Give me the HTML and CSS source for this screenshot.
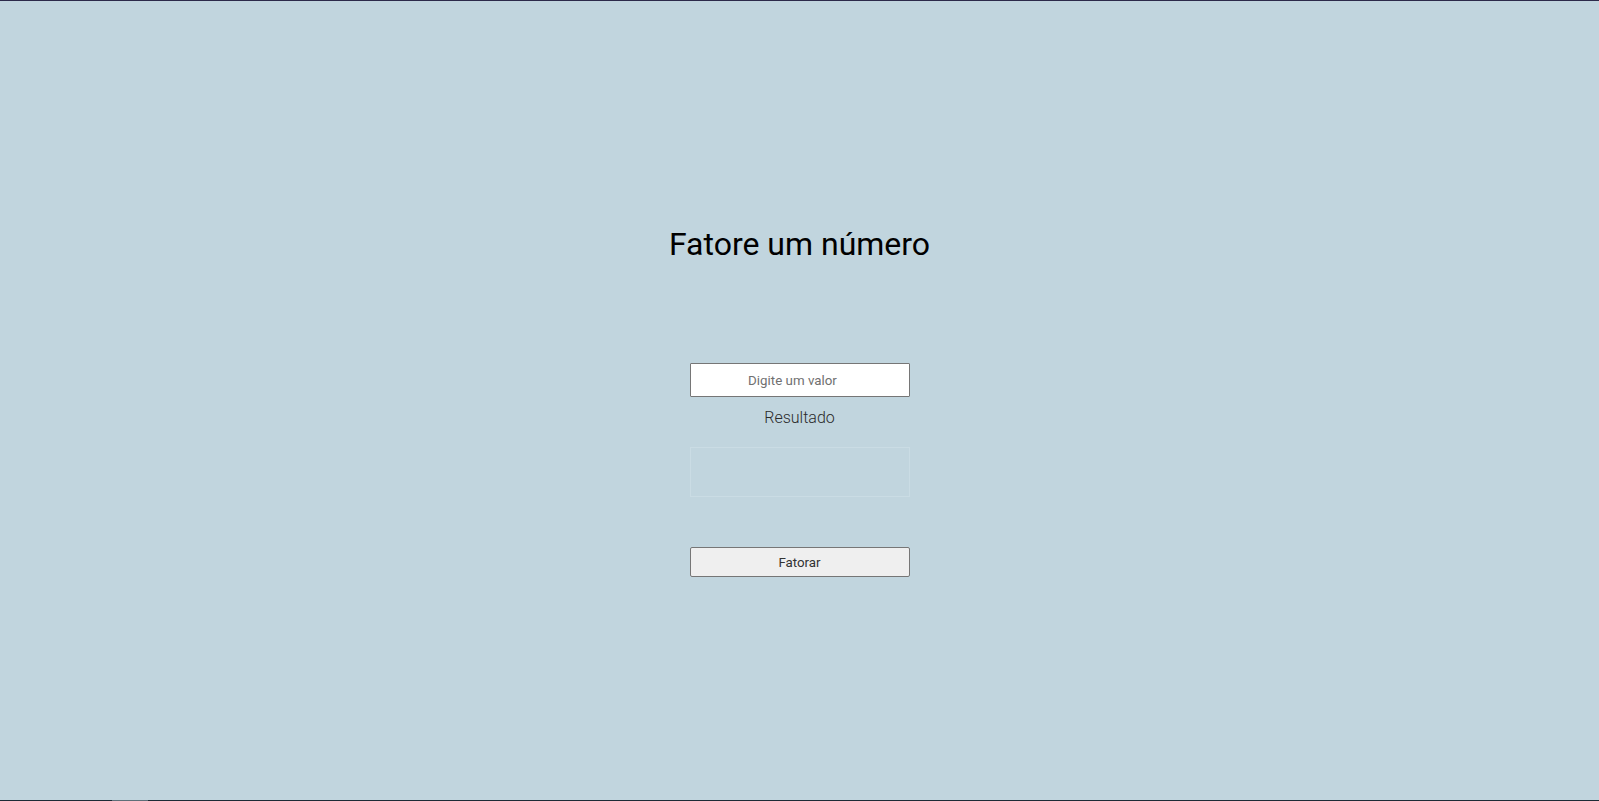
FILE: index.html
```html
<!DOCTYPE html>
<html lang="pt-BR">
<head>
<meta charset="utf-8">
<title>Fatore um número</title>
<link rel="stylesheet" href="styles.css">
</head>
<body>
<div class="page">
  <main class="main">
    <h1 class="title">Fatore um número</h1>
    <div class="form">
      <input class="field" type="text" placeholder="Digite um valor">
      <p class="label">Resultado</p>
      <div class="result"></div>
      <button class="btn" type="button">Fatorar</button>
    </div>
  </main>
  <div class="bottom-bar"></div>
</div>
</body>
</html>
```
FILE: styles.css
```css
html, body {
  margin: 0;
  padding: 0;
}
body {
  background: #c1d5de;
  font-family: Roboto, "Noto Sans", sans-serif;
}
.page {
  height: 801px;
  box-sizing: border-box;
  border-top: 1px solid #2c2a4a;
  display: flex;
  flex-direction: column;
}
.main {
  flex: 1;
  display: flex;
  flex-direction: column;
  align-items: center;
  padding-top: 225px;
}
.title {
  margin: 0;
  font-size: 32px;
  font-weight: 400;
  line-height: 37px;
  color: #000;
}
.form {
  display: flex;
  flex-direction: column;
  align-items: center;
  margin-top: 100px;
  width: 220px;
}
.field {
  box-sizing: border-box;
  width: 220px;
  height: 34px;
  margin: 0;
  padding: 0 16px 0 2px;
  border: 1px solid #767676;
  border-radius: 1px;
  background: #fff;
  font-family: Roboto, sans-serif;
  font-size: 13.33px;
  text-align: center;
  color: #000;
}
.field::placeholder {
  color: #707070;
}
.label {
  margin: 11px 0 0;
  font-size: 16px;
  font-weight: 300;
  line-height: 19px;
  color: #2a2a2a;
}
.result {
  box-sizing: border-box;
  width: 220px;
  height: 50px;
  margin-top: 20px;
  border: 1px solid #cadce4;
}
.btn {
  box-sizing: border-box;
  width: 220px;
  height: 30px;
  margin-top: 50px;
  padding: 0;
  border: 1px solid #767676;
  border-radius: 2px;
  background: #efefef;
  font-family: Roboto, sans-serif;
  font-size: 13.33px;
  font-weight: 400;
  color: #333;
}
.bottom-bar {
  height: 1px;
  background: linear-gradient(to right, #1d2b36 0, #1d2b36 112px, #5e6f79 112px, #5e6f79 148px, #1d2b36 148px);
}
```
